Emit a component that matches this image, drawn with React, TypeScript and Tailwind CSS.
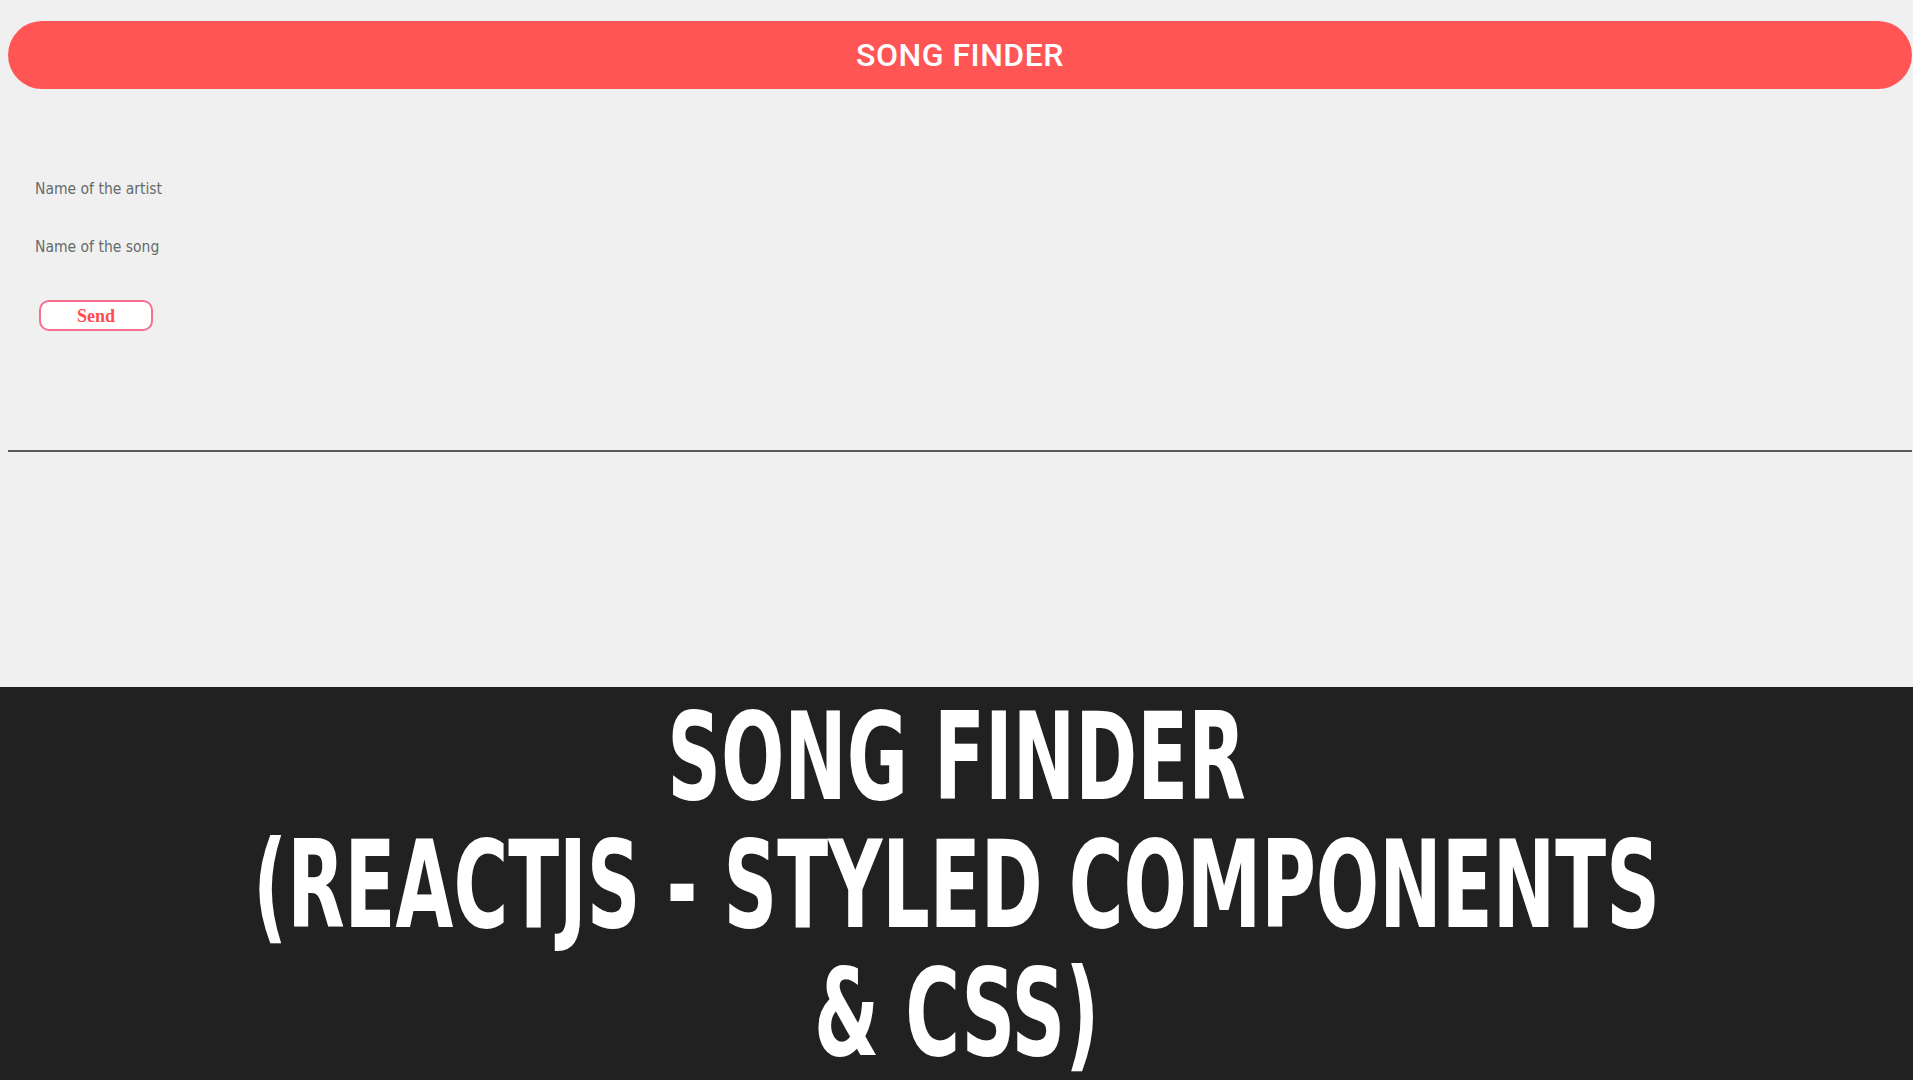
import React from 'react'

export default function App() {
  return (
    <div className="h-[1080px] w-full overflow-hidden bg-[#f0f0f0] flex flex-col">
      {/* Header */}
      <header className="mt-[21px] ml-2 mr-px h-[68px] rounded-full bg-[#ff5555] flex items-center justify-center">
        <h1 className="text-white text-[32px] font-medium tracking-[0.5px] font-['Roboto',sans-serif]">SONG FINDER</h1>
      </header>

      {/* Form */}
      <form className="flex flex-col items-start pl-[35px] pt-[86px] font-['DejaVu_Sans_Condensed','DejaVu_Sans',sans-serif] h-[361px]">
        <label className="text-[15.5px] leading-[28px] text-[#666b6c]">Name of the artist</label>
        <label className="mt-[30px] text-[15.5px] leading-[28px] text-[#666b6c]">Name of the song</label>
        <button
          type="button"
          className="mt-[39px] ml-1 w-[114px] h-[31px] rounded-[10px] border-2 border-[#f76e8e] bg-white text-[#ff4d4d] font-bold text-[18px] leading-none font-['Liberation_Serif',serif]"
        >
          Send
        </button>
      </form>

      <hr className="ml-2 mr-px border-0 border-t-2 border-[#595959]" />

      {/* Title card */}
      <section className="mt-[235px] flex-1 bg-[#212121] flex flex-col items-center pt-[6px] text-white font-bold font-['DejaVu_Sans_Condensed','DejaVu_Sans',sans-serif] text-[122px] leading-[128px]">
        <span className="inline-block scale-x-[0.68] whitespace-nowrap">SONG FINDER</span>
        <span className="inline-block scale-x-[0.68] whitespace-nowrap">(REACTJS - STYLED COMPONENTS</span>
        <span className="inline-block scale-x-[0.68] whitespace-nowrap">&amp; CSS)</span>
      </section>
    </div>
  )
}
